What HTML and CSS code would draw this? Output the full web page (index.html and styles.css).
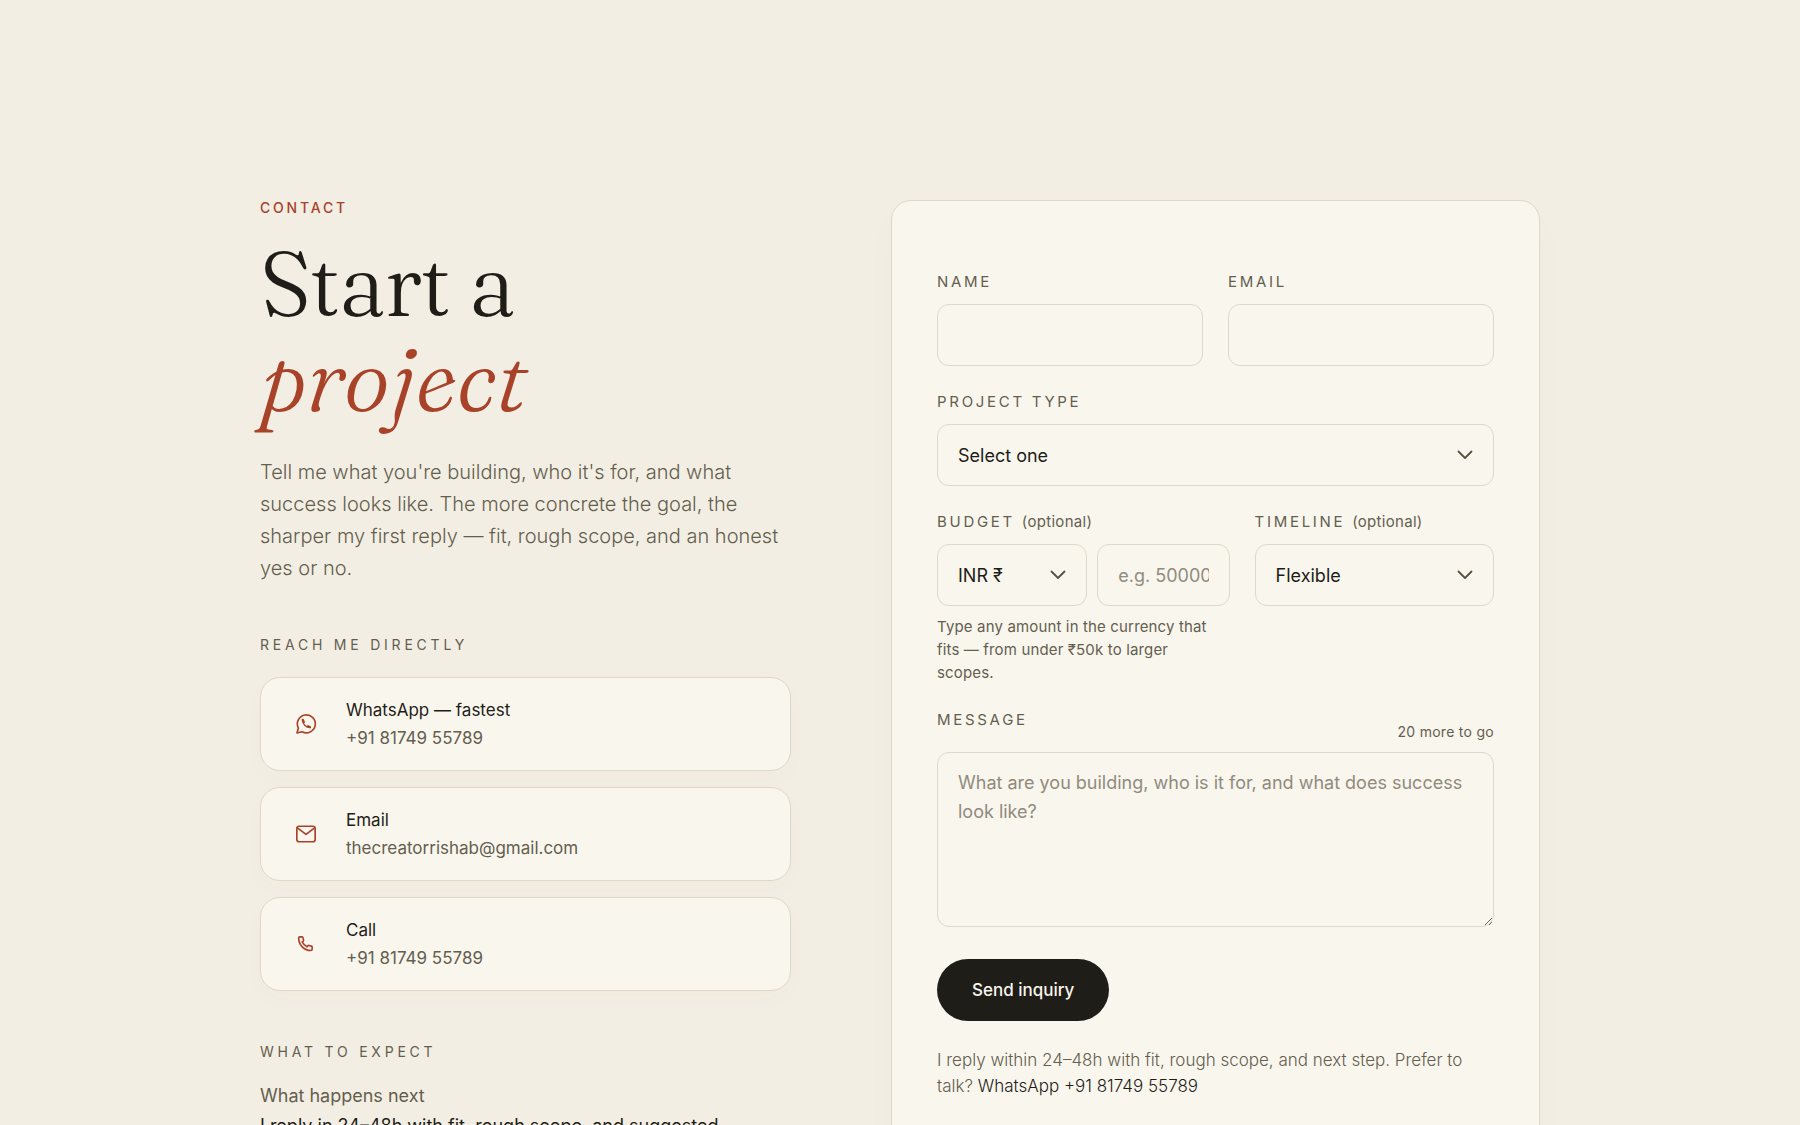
FILE: index.html
```html
<!doctype html>
<html lang="en">
<head>
<meta charset="utf-8">
<meta name="viewport" content="width=device-width, initial-scale=1.0">
<title>Contact</title>
<link rel="stylesheet" href="styles.css">
</head>
<body>
<main class="contact">
	<section class="intro">
		<p class="eyebrow">Contact</p>
		<h1>Start a <em>project</em></h1>
		<p class="lead">Tell me what you're building, who it's for, and what success looks like. The more concrete the goal, the sharper my first reply — fit, rough scope, and an honest yes or no.</p>

		<h2 class="section-label">Reach me directly</h2>
		<ul class="channels">
			<li>
				<a class="channel" href="#whatsapp">
					<span class="channel-icon">
						<svg width="22" height="22" viewBox="0 0 24 24" fill="none" stroke="currentColor" stroke-width="1.8" stroke-linecap="round" stroke-linejoin="round">
							<path d="M2.2 21.8l1.5-5.4A9.8 9.8 0 1 1 7.600 20.4z"/>
							<path d="M8.6 8c-.5 3.7 3.4 7.8 7.4 7.500" stroke-width="1.5"/>
							<path d="M8.5 7.6l1 2.3M14 14.6l2.2.9" stroke-width="2.6"/>
						</svg>
					</span>
					<span class="channel-text">
						<span class="channel-title">WhatsApp — fastest</span>
						<span class="channel-value">+91 81749 55789</span>
					</span>
				</a>
			</li>
			<li>
				<a class="channel" href="#email">
					<span class="channel-icon">
						<svg width="22" height="22" viewBox="0 0 24 24" fill="none" stroke="currentColor" stroke-width="1.8" stroke-linecap="round" stroke-linejoin="round">
							<rect x="2" y="3.5" width="20" height="17" rx="2.5"/>
							<path d="M3 5.5L12 12.500l9-7"/>
						</svg>
					</span>
					<span class="channel-text">
						<span class="channel-title">Email</span>
						<span class="channel-value">thecreatorrishab@gmail.com</span>
					</span>
				</a>
			</li>
			<li>
				<a class="channel" href="#call">
					<span class="channel-icon">
						<svg width="22" height="22" viewBox="0 0 24 24" fill="none" stroke="currentColor" stroke-width="1.8" stroke-linecap="round" stroke-linejoin="round">
							<path d="M5.2 4.2h2.3c.6 0 1 .3 1.100.8l.7 2.7c.1.4 0 .8-.3 1.100l-1.200 1c1.200 2.300 3 4.100 5.300 5.300l1-1.200c.3-.3.7-.4 1.100-.3l2.700.7c.5.1.8.5.8 1.100v2.300c0 .8-.6 1.400-1.400 1.400C10 19.100 4 13 4 5.500c0-.7.5-1.300 1.200-1.300z"/>
						</svg>
					</span>
					<span class="channel-text">
						<span class="channel-title">Call</span>
						<span class="channel-value">+91 81749 55789</span>
					</span>
				</a>
			</li>
		</ul>

		<h2 class="section-label">What to expect</h2>
		<dl class="expect-list">
			<dt>What happens next</dt>
			<dd>I reply in 24–48h with fit, rough scope, and suggested</dd>
		</dl>
	</section>

	<form class="inquiry" id="inquiryForm">
		<div class="row halves">
			<div class="field">
				<label for="name">Name</label>
				<input class="control" type="text" id="name" name="name" required>
			</div>
			<div class="field">
				<label for="email">Email</label>
				<input class="control" type="email" id="email" name="email" required>
			</div>
		</div>

		<div class="field">
			<label for="projectType">Project type</label>
			<div class="select-wrap">
				<select class="control" id="projectType" name="projectType">
					<option>Select one</option>
				</select>
				<svg class="chevron" width="16" height="10" viewBox="0 0 16 10"><path d="M1.5 1.5L8 8l6.5-6.5"/></svg>
			</div>
		</div>

		<div class="row budget-row">
			<div class="field">
				<label for="budget">Budget <span class="optional">(optional)</span></label>
				<div class="budget-inputs">
					<div class="select-wrap">
						<select class="control" id="currency" name="currency" aria-label="Currency">
							<option>INR ₹</option>
						</select>
						<svg class="chevron" width="16" height="10" viewBox="0 0 16 10"><path d="M1.5 1.5L8 8l6.5-6.5"/></svg>
					</div>
					<input class="control" type="text" id="budget" name="budget" inputmode="numeric" placeholder="e.g. 50000">
				</div>
				<p class="hint">Type any amount in the currency that fits — from under ₹50k to larger scopes.</p>
			</div>
			<div class="field">
				<label for="timeline">Timeline <span class="optional">(optional)</span></label>
				<div class="select-wrap">
					<select class="control" id="timeline" name="timeline">
						<option>Flexible</option>
					</select>
					<svg class="chevron" width="16" height="10" viewBox="0 0 16 10"><path d="M1.5 1.5L8 8l6.5-6.5"/></svg>
				</div>
			</div>
		</div>

		<div class="field">
			<div class="message-head">
				<label for="message">Message</label>
				<span class="counter">20 more to go</span>
			</div>
			<textarea class="control" id="message" name="message" placeholder="What are you building, who is it for, and what does success look like?" required></textarea>
		</div>

		<button class="send-btn" type="submit">Send inquiry</button>
		<p class="note">I reply within 24–48h with fit, rough scope, and next step. Prefer to talk? <a href="#whatsapp">WhatsApp +91 81749 55789</a></p>
	</form>
</main>
</body>
</html>
```
FILE: styles.css
```css
:root {
	--bg: #f3eee3;
	--card: #f9f6ee;
	--line: #ddd8c8;
	--ink: #1f1d18;
	--muted: #645e4e;
	--accent: #a8432a;
}

* {
	box-sizing: border-box;
}

body {
	margin: 0;
	background: var(--bg);
	color: var(--ink);
	font-family: Inter, "Liberation Sans", sans-serif;
	font-size: 18px;
}

h1, h2, p, ul, dl, dd {
	margin: 0;
	padding: 0;
}

a {
	color: inherit;
	text-decoration: none;
}

.contact {
	max-width: 1328px;
	margin: 0 auto;
	padding: 200px 24px 120px;
	display: grid;
	grid-template-columns: 9fr 11fr;
	gap: 100px;
	align-items: start;
}

/* left column */
.eyebrow {
	font-size: 14px;
	line-height: 16px;
	font-weight: 500;
	letter-spacing: 0.2em;
	text-transform: uppercase;
	color: var(--accent);
}

h1 {
	margin-top: 20px;
	font-family: Fraunces, "Liberation Serif", serif;
	font-size: 90px;
	line-height: 95px;
	font-weight: 300;
	letter-spacing: -0.02em;
}

h1 em {
	display: block;
	letter-spacing: normal;
	color: var(--accent);
}

.lead {
	margin-top: 30px;
	font-size: 20px;
	line-height: 32px;
	font-weight: 300;
	color: var(--muted);
}

.section-label {
	margin-top: 51px;
	font-size: 14px;
	line-height: 20px;
	font-weight: 400;
	letter-spacing: 0.27em;
	text-transform: uppercase;
	color: var(--muted);
}

.channels {
	margin-top: 22px;
	display: grid;
	gap: 16px;
	list-style: none;
}

.channel {
	display: flex;
	align-items: center;
	gap: 13px;
	padding: 18px;
	border: 1px solid var(--line);
	border-radius: 20px;
	background: var(--card);
	box-shadow: 0 8px 24px rgba(80, 70, 30, 0.02);
}

.channel-icon {
	display: grid;
	place-items: center;
	width: 54px;
	color: var(--accent);
}

.channel-text {
	display: grid;
	font-size: 17px;
	line-height: 28px;
}

.channel-value {
	color: var(--muted);
}

.expect-list {
	margin-top: 19px;
	line-height: 30px;
}

.expect-list dt {
	color: var(--muted);
}

/* form card */
.inquiry {
	padding: 71px 45px;
	border: 1px solid var(--line);
	border-radius: 20px;
	background: var(--card);
	box-shadow: 0 16px 40px rgba(80, 70, 30, 0.02);
	display: grid;
	gap: 26px;
}

.row {
	display: grid;
	gap: 25px;
}

.halves {
	grid-template-columns: 1fr 1fr;
}

.budget-row {
	grid-template-columns: 11fr 9fr;
}

.field {
	min-width: 0;
}

label {
	display: block;
	margin-bottom: 12px;
	font-size: 15px;
	line-height: 20px;
	letter-spacing: 0.18em;
	text-transform: uppercase;
	color: var(--muted);
}

.optional {
	letter-spacing: 0.02em;
	text-transform: none;
}

.control {
	display: block;
	width: 100%;
	height: 62px;
	padding: 0 20px;
	border: 1px solid var(--line);
	border-radius: 12px;
	background: transparent;
	color: var(--ink);
	font-family: inherit;
	font-size: 18px;
	outline: none;
}

.control:focus {
	border-color: var(--accent);
}

.control::placeholder {
	color: #908b7d;
	opacity: 1;
}

select.control {
	appearance: none;
}

textarea.control {
	height: 175px;
	padding: 15px 20px;
	line-height: 29px;
	resize: vertical;
}

.select-wrap {
	position: relative;
}

.chevron {
	position: absolute;
	right: 21px;
	top: 50%;
	transform: translateY(-50%);
	fill: none;
	stroke: #57513f;
	stroke-width: 1.8;
	stroke-linecap: round;
	stroke-linejoin: round;
	pointer-events: none;
}

.budget-inputs {
	display: grid;
	grid-template-columns: 150fr 132fr;
	gap: 10px;
}

.hint {
	margin-top: 9px;
	max-width: 280px;
	font-size: 15px;
	line-height: 23px;
	letter-spacing: 0.01em;
	color: var(--muted);
}

.message-head {
	display: flex;
	justify-content: space-between;
	align-items: flex-end;
	margin-bottom: 10px;
}

.counter {
	font-size: 14px;
	line-height: 20px;
	letter-spacing: 0.02em;
	color: var(--muted);
}

.send-btn {
	justify-self: start;
	margin-top: 6px;
	height: 62px;
	padding: 0 35px;
	border: 0;
	border-radius: 31px;
	background: var(--ink);
	color: var(--card);
	font-family: inherit;
	font-size: 17px;
	font-weight: 500;
	cursor: pointer;
}

.note {
	font-size: 17px;
	line-height: 26px;
	font-weight: 300;
	color: var(--muted);
}

.note a {
	color: var(--ink);
}

@media (max-width: 960px) {
	.contact {
		grid-template-columns: 1fr;
		gap: 60px;
		padding-top: 80px;
	}
}
```
